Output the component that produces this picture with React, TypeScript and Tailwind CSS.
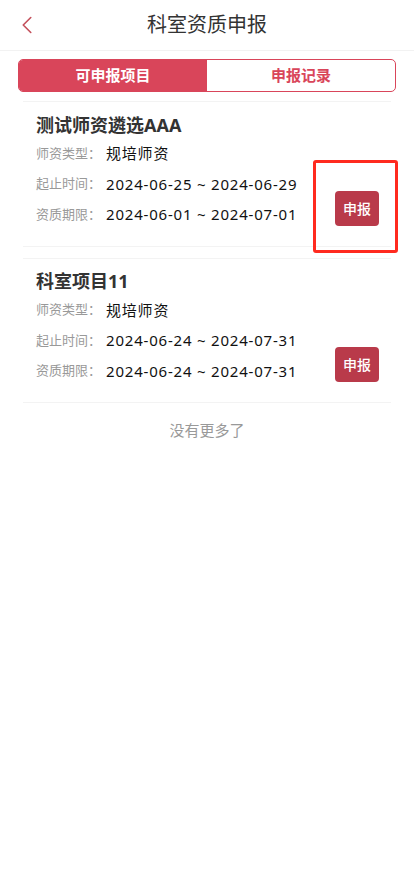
import { ChevronLeft } from "lucide-react";

const items = [
  {
    title: "测试师资遴选AAA",
    type: "规培师资",
    time: "2024-06-25 ~ 2024-06-29",
    period: "2024-06-01 ~ 2024-07-01",
    marked: true,
  },
  {
    title: "科室项目11",
    type: "规培师资",
    time: "2024-06-24 ~ 2024-07-31",
    period: "2024-06-24 ~ 2024-07-31",
    marked: false,
  },
];

const Row = ({ label, value }: { label: string; value: string }) => (
  <div className="flex items-center h-[30.5px]">
    <span className="w-[70px] text-[13px] text-[#999]">{label}</span>
    <span className="text-[15px] text-[#111] tracking-[0.8px]">{value}</span>
  </div>
);

export default function App() {
  return (
    <div
      className="w-[414px] min-h-[874px] bg-white"
      style={{ fontFamily: '"Noto Sans", "Noto Sans CJK SC", sans-serif' }}
    >
      {/* header */}
      <div className="relative flex items-center justify-center h-[51px] border-b border-[#f2f2f2]">
        <ChevronLeft className="absolute left-[12px] top-[10px] text-[#c4505c]" size={30} strokeWidth={1.3} />
        <h1 className="text-[20px] text-[#333]">科室资质申报</h1>
      </div>

      {/* tabs */}
      <div className="mx-[18px] mt-[8px] flex h-[33px] rounded-[5px] border border-[#d9455a] overflow-hidden">
        <div className="flex-1 flex items-center justify-center bg-[#d9455a] text-white text-[15px] font-bold">
          可申报项目
        </div>
        <div className="flex-1 flex items-center justify-center text-[#d9455a] text-[15px] font-bold">
          申报记录
        </div>
      </div>

      {/* list */}
      <div className="mt-[9px] mx-[23px] flex flex-col gap-[11px]">
        {items.map((it) => (
          <div
            key={it.title}
            className="relative flex border-t border-b border-[#f3f3f3] pl-[13px] pr-[12px] pt-[11px] pb-[16px]"
          >
            <div className="flex-1">
              <div className="h-[24px] flex items-center text-[18px] font-bold text-[#333] mb-[1px]">
                {it.title}
              </div>
              <Row label="师资类型：" value={it.type} />
              <Row label="起止时间：" value={it.time} />
              <Row label="资质期限：" value={it.period} />
            </div>
            <button className="self-end mb-[4px] w-[44px] h-[35px] rounded-[4px] bg-[#b93a4a] text-white text-[14px] font-medium">
              申报
            </button>
            {it.marked && (
              <div className="absolute left-[290px] top-[58px] w-[85px] h-[93px] rounded-[3px] border-[3px] border-[#ff2a1f]" />
            )}
          </div>
        ))}
      </div>

      <div className="mt-[16px] text-center text-[15px] text-[#999]">没有更多了</div>
    </div>
  );
}
